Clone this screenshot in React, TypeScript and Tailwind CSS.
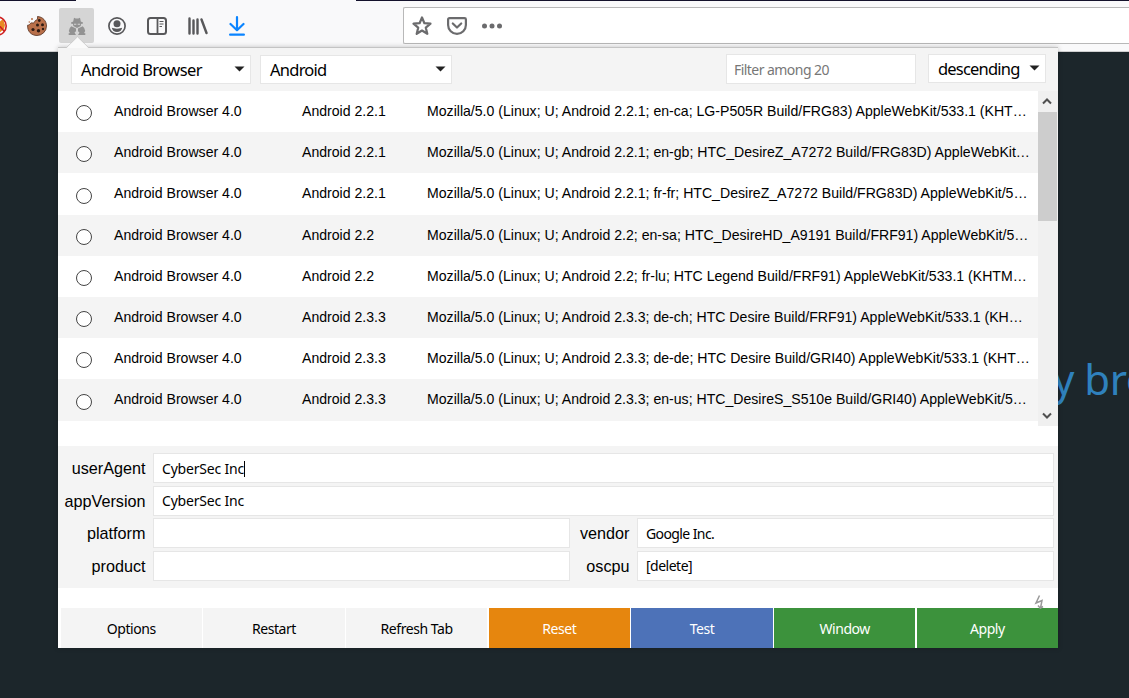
import React from "react";

const rows = [
  ["Android 2.2.1", "Mozilla/5.0 (Linux; U; Android 2.2.1; en-ca; LG-P505R Build/FRG83) AppleWebKit/533.1 (KHTML, like Gecko) Version/4.0 Mobile Safari/533.1"],
  ["Android 2.2.1", "Mozilla/5.0 (Linux; U; Android 2.2.1; en-gb; HTC_DesireZ_A7272 Build/FRG83D) AppleWebKit/533.1 (KHTML, like Gecko) Version/4.0 Mobile Safari/533.1"],
  ["Android 2.2.1", "Mozilla/5.0 (Linux; U; Android 2.2.1; fr-fr; HTC_DesireZ_A7272 Build/FRG83D) AppleWebKit/533.1 (KHTML, like Gecko) Version/4.0 Mobile Safari/533.1"],
  ["Android 2.2", "Mozilla/5.0 (Linux; U; Android 2.2; en-sa; HTC_DesireHD_A9191 Build/FRF91) AppleWebKit/533.1 (KHTML, like Gecko) Version/4.0 Mobile Safari/533.1"],
  ["Android 2.2", "Mozilla/5.0 (Linux; U; Android 2.2; fr-lu; HTC Legend Build/FRF91) AppleWebKit/533.1 (KHTML, like Gecko) Version/4.0 Mobile Safari/533.1"],
  ["Android 2.3.3", "Mozilla/5.0 (Linux; U; Android 2.3.3; de-ch; HTC Desire Build/FRF91) AppleWebKit/533.1 (KHTML, like Gecko) Version/4.0 Mobile Safari/533.1"],
  ["Android 2.3.3", "Mozilla/5.0 (Linux; U; Android 2.3.3; de-de; HTC Desire Build/GRI40) AppleWebKit/533.1 (KHTML, like Gecko) Version/4.0 Mobile Safari/533.1"],
  ["Android 2.3.3", "Mozilla/5.0 (Linux; U; Android 2.3.3; en-us; HTC_DesireS_S510e Build/GRI40) AppleWebKit/533.1 (KHTML, like Gecko) Version/4.0 Mobile Safari/533.1"],
];

const actions = [
  ["Options", "bg-[#f4f4f4] text-black"],
  ["Restart", "bg-[#f4f4f4] text-black"],
  ["Refresh Tab", "bg-[#f4f4f4] text-black"],
  ["Reset", "bg-[#e6860e] text-white"],
  ["Test", "bg-[#4d72b8] text-white"],
  ["Window", "bg-[#3c923c] text-white"],
  ["Apply", "bg-[#3c923c] text-white"],
];

function Toolbar() {
  return (
    <header className="flex h-[52px] w-full items-start border-b border-[#cfcfd0] bg-[#f9f9fa]">
      <div className="flex h-[52px] w-[403px] shrink-0 items-start overflow-hidden pt-2">
        <svg className="-ml-[14px] mt-[7px] h-[22px] w-[22px]" viewBox="0 0 22 22">
          <path d="M7 6l5 2 5-4 2 6-1 4-6 5-5-2z" fill="#e98a22" />
          <circle cx="11" cy="11" r="9.2" fill="none" stroke="#cf1f1f" strokeWidth="1.600" />
          <path d="m11 8 7 8" stroke="#cf1f1f" strokeWidth="1.600" />
        </svg>
        <svg className="ml-[19px] mt-2 h-5 w-5" viewBox="0 0 20 20">
          <path d="M10.5.5c0 2 .3 3.4-1.3 3.7-1.3.1-1.5 1.8-2.3 2.6-.9.8-1.8-.4-3 .3C2.6 8 2.4 9.300.6 9.2.2 15.500 4.500 19.500 10 19.500a9.500 9.500 0 0 0 9.500-9.500C19.500 5 15.800.8 10.500.5z" fill="#b9704a" stroke="#55301f" strokeWidth=".8" />
          <g fill="#2e1b13"><circle cx="12.300" cy="4.500" r="1.400" /><circle cx="10.500" cy="9" r="1.500" /><circle cx="15.500" cy="8.700" r="1.500" /><circle cx="6" cy="13.500" r="1.600" /><circle cx="11.500" cy="14.700" r="1.700" /><circle cx="16" cy="13" r="1.200" /></g>
          <g fill="#b9704a"><circle cx="2.300" cy="6" r=".8" /><circle cx="5" cy="3" r="1" /></g>
        </svg>
        <div className="ml-3 flex h-[35px] w-[35px] shrink-0 items-start justify-center rounded-[2px] bg-[#d5d5d5] pt-[9px]">
          <svg className="h-[18px] w-[18px]" viewBox="0 0 18 18" fill="#929292">
            <path d="M5.200 4.500 6 .8l1.700.7h2.600L12 .8l.8 3.700 2.200.9v1.200l-2 .4-.3 2L9 11 5.300 9 5 7l-2-.4V5.400z" />
            <path d="M3.300 9.300 8 11.500v2.800l-1.500 1.200L8 18H.8L.5 16.500l1.400-.6L.8 14l1-3zM14.700 9.300 10 11.500v2.800l1.500 1.200L10 18h7.200l.3-1.500-1.400-.6 1.100-1.900-1-3z" />
            <path d="M6 6.800h2.300v1H6zm3.700 0H12v1H9.700z" fill="#d5d5d5" />
          </svg>
        </div>
        <svg className="ml-[14px] mt-[9px] h-[18px] w-[18px]" viewBox="0 0 18 18">
          <circle cx="9" cy="9" r="8.100" fill="none" stroke="#58585a" strokeWidth="1.700" />
          <circle cx="9" cy="6.800" r="3.500" fill="#58585a" />
          <path d="M3.800 10.800c1.500.1 2.600 1 5.200 1s3.700-.9 5.200-1c-.5 2.700-2.500 4.300-5.200 4.300s-4.700-1.600-5.200-4.300z" fill="#58585a" />
        </svg>
        <svg className="ml-[21px] mt-[9px] h-[18px] w-5" viewBox="0 0 20 18" fill="none" stroke="#58585a">
          <rect x="1" y="1" width="18" height="16" rx="2.500" strokeWidth="2" />
          <path d="M10.500 2v14" strokeWidth="1.800" />
          <path d="M12.500 4.500h4M12.500 7h4M12.500 9.500h2.500" strokeWidth="1" />
        </svg>
        <svg className="ml-[21px] mt-[9px] h-[18px] w-5" viewBox="0 0 20 18" fill="none" stroke="#58585a" strokeWidth="2.400" strokeLinecap="round">
          <path d="M1.500 1.500v15M5.500 3.500v13M9.500 2.500v14" />
          <path d="m13.500 2.500 5 13.500" />
        </svg>
        <svg className="ml-[21px] mt-2 h-5 w-4" viewBox="0 0 16 20" fill="none" stroke="#0a84ff" strokeWidth="2.200" strokeLinecap="round" strokeLinejoin="round">
          <path d="M8 1.200v13M1.500 8 8 14.300 14.500 8M1.100 18.700h13.800" />
        </svg>
      </div>
      <div className="mt-[7px] flex h-[37px] flex-1 items-start rounded-l-[2px] border border-r-0 border-[#b8b8b8] bg-white pl-2 pt-2">
        <svg className="h-[20px] w-[20px]" viewBox="0 0 20 20" fill="none" stroke="#6b6b6d" strokeWidth="2.200" strokeLinejoin="round">
          <path d="m10 1.500 2.400 5.700 6.100.5-4.700 4 1.500 6.100-5.300-3.300-5.300 3.300 1.500-6.100-4.700-4 6.100-.5z" />
        </svg>
        <svg className="ml-[15px] mt-px h-[18px] w-5" viewBox="0 0 20 18" fill="none" stroke="#6b6b6d" strokeWidth="2.200" strokeLinecap="round" strokeLinejoin="round">
          <path d="M2.500 1.200h15c1 0 1.400.4 1.400 1.300V8a8.900 8.900 0 0 1-17.800 0V2.500c0-.9.400-1.300 1.400-1.300z" />
          <path d="m5.800 6.500 4.200 4 4.200-4" />
        </svg>
        <svg className="ml-[15px] mt-[7px] h-[6px] w-[20px]" viewBox="0 0 20 6" fill="#6b6b6d">
          <circle cx="2.500" cy="3" r="2.500" /><circle cx="10" cy="3" r="2.500" /><circle cx="17.500" cy="3" r="2.500" />
        </svg>
      </div>
    </header>
  );
}

function Select({ label, className }: { label: string; className: string }) {
  return (
    <div className={"flex items-center justify-between border border-[#e6e6e6] bg-white pl-[9px] pr-[5px] font-['Noto_Sans',sans-serif] text-[16.5px] leading-5 " + className}>
      <span>{label}</span>
      <svg className="mb-[2px] h-[6px] w-[11px] shrink-0" viewBox="0 0 11 6"><path d="M.5.5h10l-5 5z" fill="#222" /></svg>
    </div>
  );
}

function Label({ children }: { children: string }) {
  return <label className="h-[30px] pr-[7.5px] text-right text-[16.200px] leading-[31px]">{children}</label>;
}

function Field({ value = "", className = "", caret = false }: { value?: string; className?: string; caret?: boolean }) {
  return (
    <div className={"flex h-[30px] items-center border border-[#e6e6e6] bg-white pl-2 font-['Noto_Sans',sans-serif] text-[14px] leading-5 " + className}>
      {value}
      {caret && <i className="h-4 w-px bg-black" />}
    </div>
  );
}

export default function App() {
  return (
    <main className="relative h-[698px] w-[1129px] overflow-hidden bg-[#1c262b] font-['Liberation_Sans',Arial,sans-serif] text-black">
      <Toolbar />
      <div className="absolute left-0 top-0 h-px w-[76px] bg-[#14122c]" />
      <div className="absolute right-0 top-0 h-px w-[773px] bg-[#14122c]" />
      <p className="absolute left-[1053px] top-[349px] whitespace-nowrap font-['Noto_Sans',sans-serif] text-[42px] leading-[60px] tracking-[-0.5px] text-[#2f81bd]">y bro</p>

      <section className="absolute left-[58px] top-[47px] flex h-[601px] w-[1000px] flex-col border-t border-[#c4c4c4] bg-white shadow-[0_0_5px_rgba(0,0,0,0.22)]">
        <div className="flex h-[43px] shrink-0 items-start bg-[#f4f4f4] pl-[13px] pr-3 pt-[6px]">
          <Select label="Android Browser" className="mt-px h-[29px] w-[180px] tracking-[-0.6px]" />
          <Select label="Android" className="ml-[9px] mt-px h-[29px] w-[192px] tracking-[-0.75px]" />
          <div className="ml-auto h-[30px] w-[190px] border border-[#e6e6e6] bg-white pl-[7px] pt-px font-['Noto_Sans',sans-serif] text-[14px] leading-[28px] tracking-[-0.55px] text-[#777]">Filter among 20</div>
          <Select label="descending" className="ml-3 h-[29px] w-[118px] tracking-[-0.8px]" />
        </div>

        <div className="flex h-[335px] shrink-0">
          <div className="flex h-[329.5px] w-[979.5px] shrink-0 flex-col">
            {rows.map(([os, ua], i) => (
              <div key={i} className="grid min-h-0 flex-1 grid-cols-[56px_188px_125px_604px] text-[14.1px] leading-[40.8px] odd:bg-white even:bg-[#f4f4f4]">
                <span className="ml-[18px] mt-[14.3px] h-4 w-4 rounded-full border border-[#444] bg-white" />
                <span>Android Browser 4.0</span>
                <span>{os}</span>
                <span className="truncate">{ua}</span>
              </div>
            ))}
          </div>
          <div className="flex flex-1 flex-col items-center bg-[#f0f0f0]">
            <svg className="mr-px mt-[7px] h-[7px] w-[10px]" viewBox="0 0 10 7"><path d="m1 5.500 4-4 4 4" fill="none" stroke="#505050" strokeWidth="2" /></svg>
            <div className="mr-px mt-[7px] h-[109px] w-[19px] bg-[#cdcdcd]" />
            <svg className="mb-[7px] mr-px mt-auto h-[7px] w-[10px]" viewBox="0 0 10 7"><path d="m1 1.500 4 4 4-4" fill="none" stroke="#505050" strokeWidth="2" /></svg>
          </div>
        </div>

        <div className="mt-5 grid h-[142px] shrink-0 grid-cols-[95px_417px_67px_417px] content-start gap-y-[2.67px] bg-[#f4f4f4] pt-[7px]">
          <Label>userAgent</Label>
          <Field value="CyberSec Inc" className="col-span-3 pt-px tracking-[-0.2px]" caret />
          <Label>appVersion</Label>
          <Field value="CyberSec Inc" className="col-span-3 tracking-[-0.2px]" />
          <Label>platform</Label>
          <Field />
          <Label>vendor</Label>
          <Field value="Google Inc." className="pt-px tracking-[-0.6px]" />
          <Label>product</Label>
          <Field />
          <Label>oscpu</Label>
          <Field value="[delete]" className="tracking-[-0.5px]" />
        </div>

        <div className="mt-5 grid h-10 shrink-0 grid-cols-7 gap-[1.4px] pl-[2.600px]">
          {actions.map(([label, tone]) => (
            <button key={label} className={"pb-px pt-px font-['Noto_Sans',sans-serif] text-[14px] tracking-[-0.45px] " + tone}>{label}</button>
          ))}
        </div>
        <svg className="absolute left-[976px] top-[547px] h-[14px] w-[12px]" viewBox="0 0 12 14" fill="none" stroke="#999" strokeWidth="1.500">
          <path d="M5.500.5 2 8l6-2.500L6.500 13M4 10.500 6.300 13.200 9 11.500" />
        </svg>
      </section>
      <svg className="absolute left-[66px] top-[36px] h-[12px] w-[23px]" viewBox="0 0 23 12"><path d="M.5 12 11.500.8 22.500 12z" fill="#fafafa" /><path d="M.5 11.500 11.500.8l11 10.700" fill="none" stroke="#c8c8c8" strokeWidth=".8" /></svg>
    </main>
  );
}
